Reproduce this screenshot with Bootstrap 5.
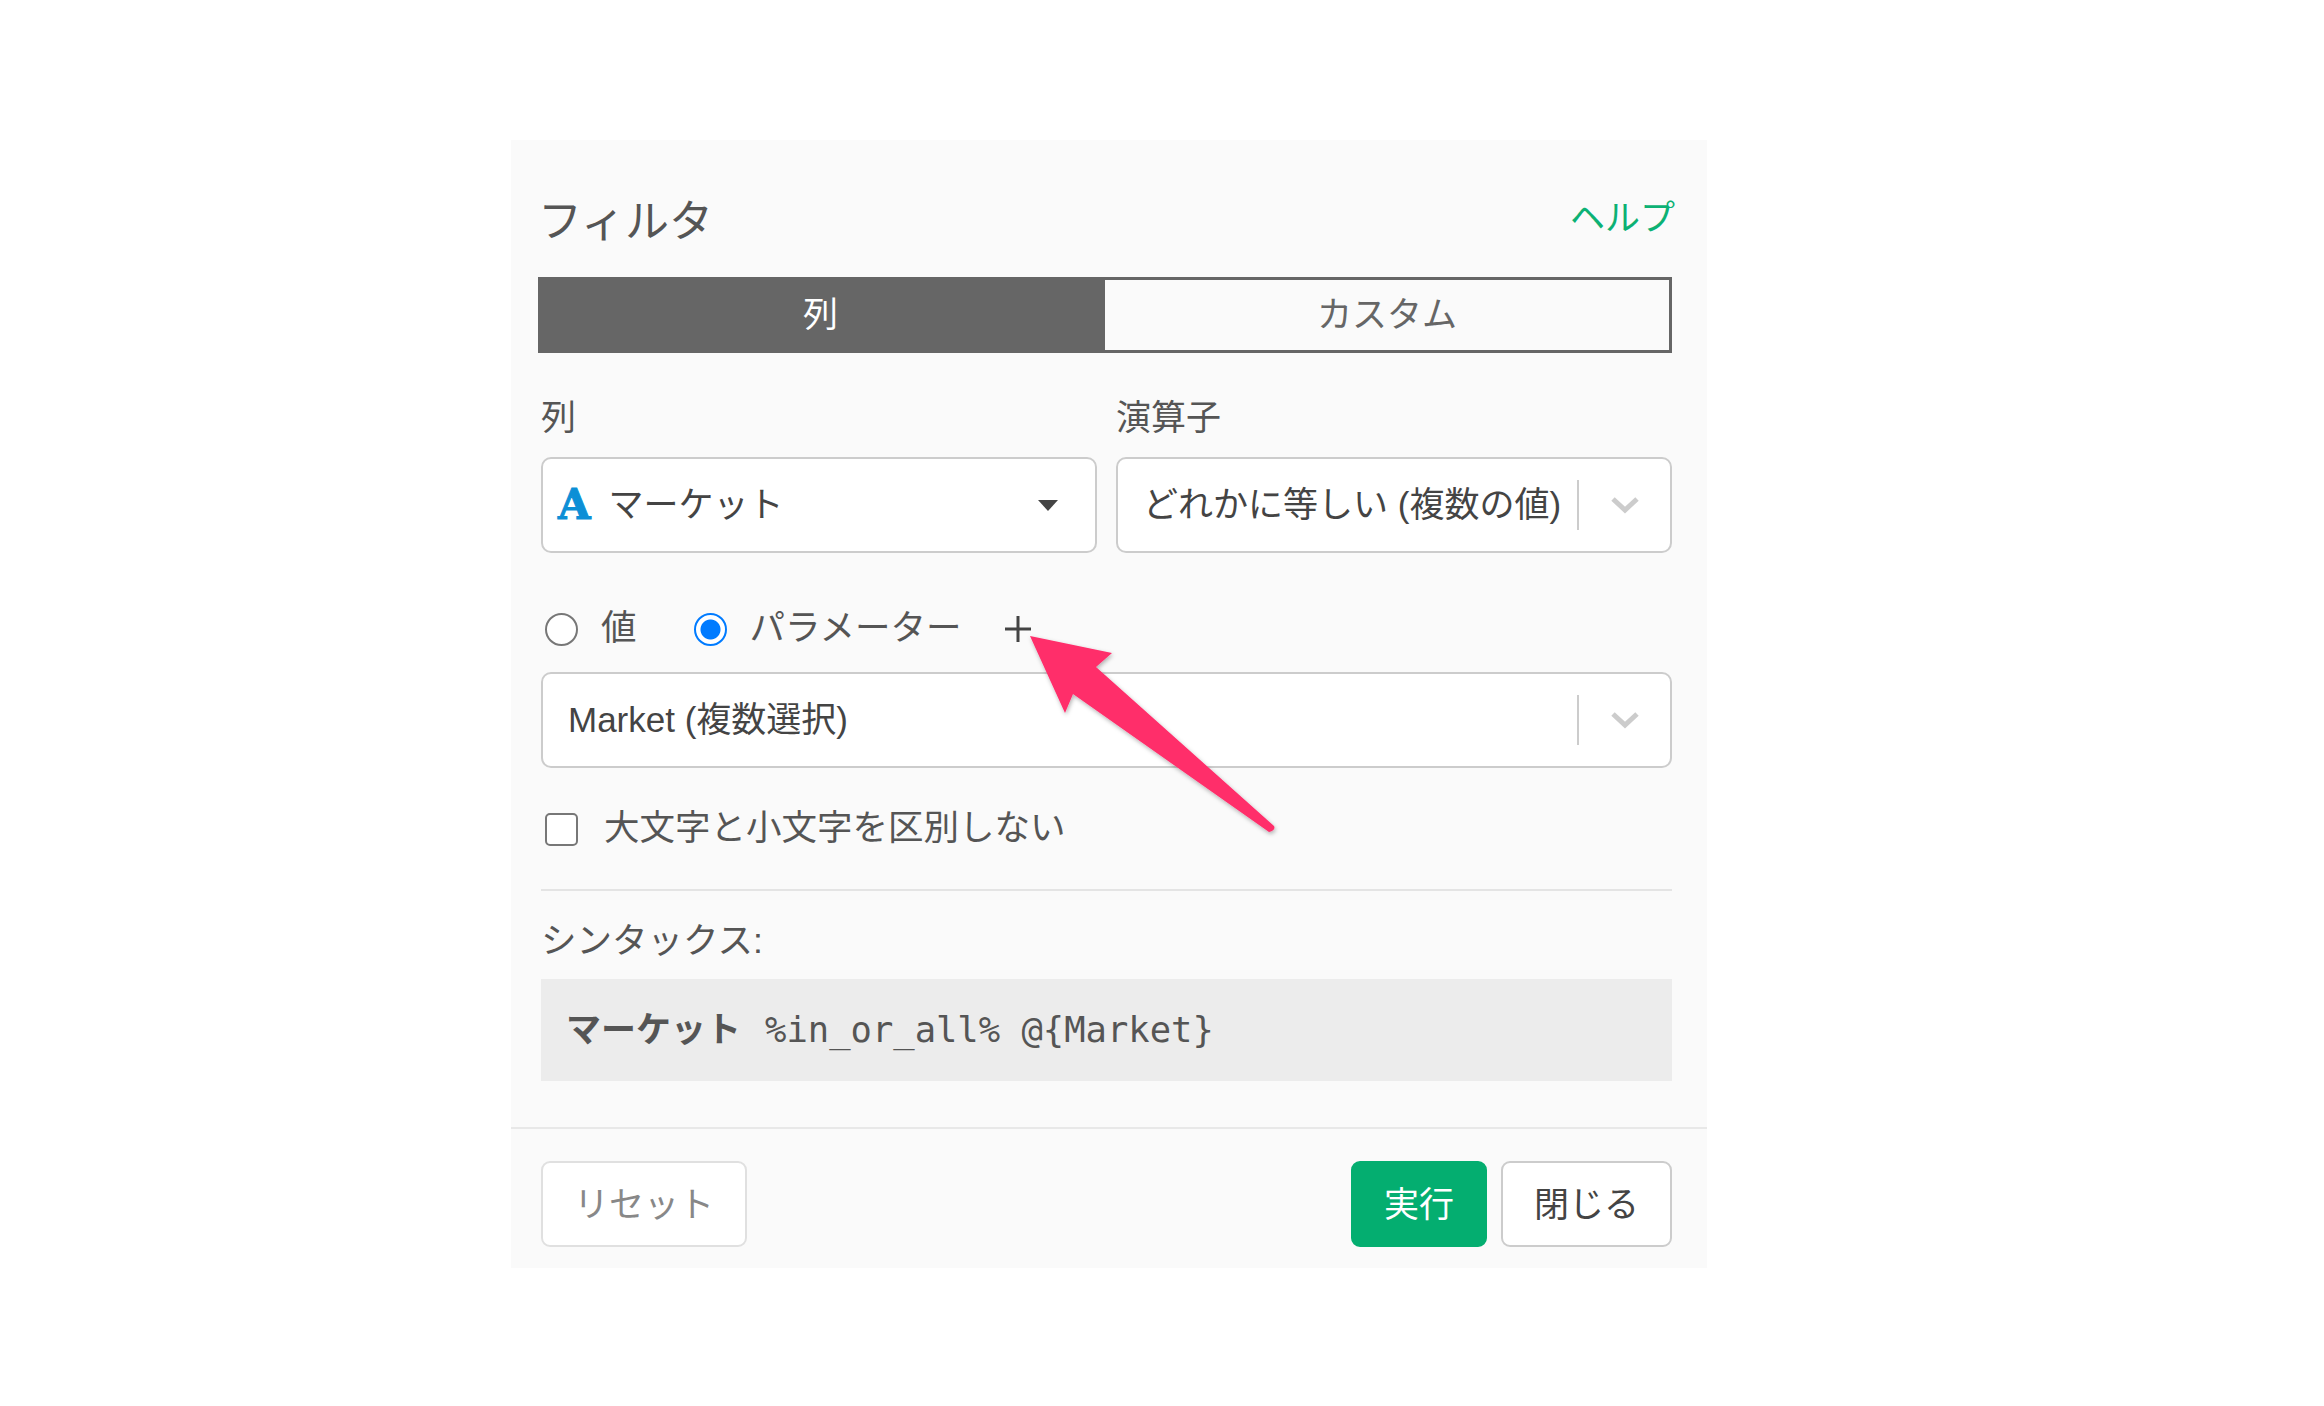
<!DOCTYPE html>
<html lang="ja">
<head>
  <meta charset="UTF-8" />
  <meta name="viewport" content="width=device-width, initial-scale=1.0"/>
  <title>フィルタ</title>
  <link href="https://cdn.jsdelivr.net/npm/bootstrap@5.3.3/dist/css/bootstrap.min.css" rel="stylesheet" />
  <style>
    body {
      background: #fff;
      font-family: "Liberation Sans", "Noto Sans CJK JP", sans-serif;
      font-size: 35.5px;
      color: #555;
    }
    .filter-panel { position: relative; width: 1196px; margin: 140px 0 0 511px; background: #fafafa; }
    .panel-main { padding: 53px 35px 46px 30px; }
    .panel-title { font-size: 44px; font-weight: 400; line-height: 58px; margin: 0 0 0 -3px; color: #555; }
    .help-link { font-size: 35px; line-height: 50px; color: #0cb174; text-decoration: none; margin-right: -3px; }
    .mode-tabs { margin: 26px 0 0 -3px; width: calc(100% + 3px); height: 76px; }
    .mode-tabs .btn {
      font-size: 35px; line-height: 1.2; padding: 0; color: #666; background: #fafafa;
      border: 3px solid #666; border-radius: 0;
    }
    .mode-tabs .btn.active { flex: 0 0 565px; background: #666; color: #fff; }
    .field-row { margin-top: 38px; gap: 19px; }
    .field-label { line-height: 50px; margin: 2px 0 14px; font-size: 35px; }
    .select-box {
      height: 96px; background: #fff; border: 2px solid #ccc; border-radius: 10px;
      color: #444; line-height: 50px; font-size: 35px;
    }
    .select-name { padding-left: 25px; }
    .type-mark {
      font-family: "DejaVu Serif", serif; font-weight: 700; font-size: 42px; color: #0c8fd6;
      -webkit-text-stroke: 1px #0c8fd6; margin: 0 18px 0 15px;
    }
    .caret-down { width: 0; height: 0; border: 10px solid transparent; border-top: 11px solid #444; border-bottom: 0; margin-right: 37px; }
    .select-sep { width: 2px; height: 50px; background: #ccc; }
    .chevron { width: 91px; }
    .radio-row { margin-top: 51px; height: 50px; }
    .form-check-input.pick {
      width: 33px; height: 33px; margin: 0; background-color: #fff; border: 2px solid #777; box-shadow: none;
    }
    .form-check-input.pick:checked {
      border-color: #007bff; background-color: #fff; background-size: 100%;
      background-image: radial-gradient(circle, #007bff 0 9.5px, #fff 10.5px);
    }
    .form-check-input.pick[type=checkbox] { border-radius: 5px; }
    .pick-label { margin: 0 0 0 23px; color: #555; }
    .form-check-input.pick.second-pick { margin-left: 57px; }
    .plus-btn { margin-left: 43px; line-height: 0; }
    .param-select { margin-top: 18px; }
    .check-row { margin-top: 36px; height: 50px; }
    .check-row .pick-label { margin-left: 26px; }
    .thin-line { margin: 35px 0 0 0; border: 0; border-top: 2px solid #e4e4e4; opacity: 1; }
    .syntax-label { margin-top: 25px; line-height: 50px; }
    .syntax-box { margin-top: 13px; height: 102px; background: #ececec; padding-left: 25px; color: #555; font-size: 35px; }
    .syntax-box b { font-weight: 700; }
    .syntax-box code { font-family: "DejaVu Sans Mono", monospace; font-size: 35.5px; color: #555; margin-left: 24px; }
    .panel-foot { border-top: 2px solid #e8e8e8; padding: 32px 35px 21px 30px; }
    .foot-btn {
      height: 86px; font-size: 35px; line-height: 1; padding: 0; background: #fff; border: 2px solid #ccc;
      border-radius: 9px; color: #444;
    }
    .reset-btn { width: 206px; color: #888; border-color: #e0e0e0; }
    .run-btn { width: 136px; background: #04ae70; border-color: #04ae70; color: #fff; }
    .close-btn { width: 171px; margin-left: 14px; }
    .pointer-arrow { position: absolute; left: 0; top: 0; pointer-events: none; }
  </style>
</head>

<body>
  <div class="filter-panel">
    <div class="panel-main">
      <div class="d-flex justify-content-between align-items-start">
        <h4 class="panel-title">フィルタ</h4>
        <a href="#" class="help-link">ヘルプ</a>
      </div>

      <div class="btn-group mode-tabs d-flex">
        <button type="button" class="btn active">列</button>
        <button type="button" class="btn flex-grow-1">カスタム</button>
      </div>

      <div class="d-flex field-row">
        <div class="flex-fill w-50">
          <div class="field-label">列</div>
          <div class="select-box d-flex align-items-center">
            <span class="type-mark">A</span>
            <span class="flex-grow-1">マーケット</span>
            <span class="caret-down"></span>
          </div>
        </div>
        <div class="flex-fill w-50">
          <div class="field-label">演算子</div>
          <div class="select-box d-flex align-items-center">
            <span class="select-name flex-grow-1 text-nowrap">どれかに等しい (複数の値)</span>
            <span class="select-sep"></span>
            <span class="chevron d-flex justify-content-center">
              <svg width="30" height="18" viewBox="0 0 30 18"><path d="M3 3 15 14 27 3" fill="none" stroke="#ccc" stroke-width="5"/></svg>
            </span>
          </div>
        </div>
      </div>

      <div class="d-flex align-items-center radio-row">
        <input class="form-check-input pick ms-1" type="radio" name="src" id="src-value">
        <label class="pick-label" for="src-value">値</label>
        <input class="form-check-input pick second-pick" type="radio" name="src" id="src-param" checked>
        <label class="pick-label" for="src-param">パラメーター</label>
        <span class="plus-btn">
          <svg width="28" height="28" viewBox="0 0 28 28"><path d="M14 1V27M1 14H27" stroke="#444" stroke-width="3"/></svg>
        </span>
      </div>

      <div class="select-box param-select d-flex align-items-center">
        <span class="select-name flex-grow-1">Market (複数選択)</span>
        <span class="select-sep"></span>
        <span class="chevron d-flex justify-content-center">
          <svg width="30" height="18" viewBox="0 0 30 18"><path d="M3 3 15 14 27 3" fill="none" stroke="#ccc" stroke-width="5"/></svg>
        </span>
      </div>

      <div class="d-flex align-items-center check-row">
        <input class="form-check-input pick ms-1" type="checkbox" id="ignore-case">
        <label class="pick-label" for="ignore-case">大文字と小文字を区別しない</label>
      </div>

      <hr class="thin-line">

      <div class="syntax-label">シンタックス:</div>
      <div class="syntax-box d-flex align-items-center">
        <b>マーケット</b><code>%in_or_all% @{Market}</code>
      </div>
    </div>

    <div class="panel-foot d-flex align-items-center">
      <button type="button" class="btn foot-btn reset-btn">リセット</button>
      <button type="button" class="btn foot-btn run-btn ms-auto">実行</button>
      <button type="button" class="btn foot-btn close-btn">閉じる</button>
    </div>

    <!-- annotation drawn over the screenshot -->
    <svg class="pointer-arrow" width="800" height="720" viewBox="511 140 800 720">
      <defs>
        <filter id="arrow-shadow" x="-10%" y="-10%" width="120%" height="120%">
          <feDropShadow dx="1" dy="2" stdDeviation="2" flood-color="#000" flood-opacity=".3"/>
        </filter>
      </defs>
      <path d="M1030 636 1112 653 1096 667 1274 826Q1276 830 1269 832L1073 694 1065 713Z" fill="#ff2d6b" filter="url(#arrow-shadow)"/>
    </svg>
  </div>

  <script src="https://cdn.jsdelivr.net/npm/bootstrap@5.3.3/dist/js/bootstrap.bundle.min.js"></script>
</body>
</html>
